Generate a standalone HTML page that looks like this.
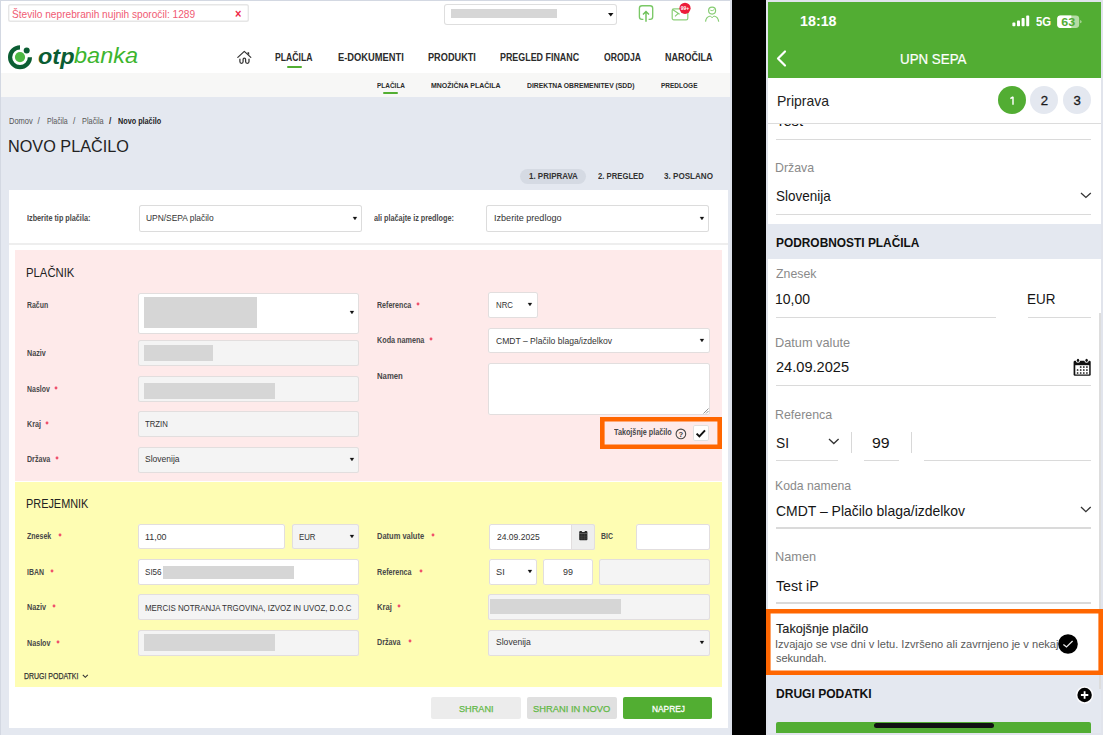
<!DOCTYPE html>
<html><head><meta charset="utf-8"><style>
html,body{margin:0;padding:0;}
body{width:1103px;height:735px;position:relative;overflow:hidden;background:#e4e8f0;font-family:"Liberation Sans", sans-serif;}
.a{position:absolute;box-sizing:border-box;}
.t{position:absolute;line-height:1;white-space:nowrap;transform-origin:0 0;}
svg{position:absolute;overflow:visible;}
</style></head><body>
<div class="a" style="left:0px;top:0px;width:732px;height:735px;background:#e4e8f0;"></div>
<div class="a" style="left:0px;top:0px;width:1.2px;height:735px;background:#d3d8e2;"></div>
<div class="a" style="left:0px;top:0px;width:732px;height:1.3px;background:#d3d8e2;"></div>
<div class="a" style="left:1.2px;top:1.4px;width:729.0999999999999px;height:72.0px;background:#ffffff;"></div>
<div class="a" style="left:1.2px;top:73.4px;width:729.0999999999999px;height:23.39999999999999px;background:#f7f7f6;"></div>
<div class="a" style="left:8.3px;top:4.0px;width:240.5px;height:18.0px;background:#fff;box-shadow:inset 0 0 0 1.4px #e6e6e6;border-radius:2.5px;"></div>
<span class="t" style="left:12.30px;top:9.76px;font-size:10.2px;font-weight:400;color:#f05a73;transform:scaleX(0.9946);">Število neprebranih nujnih sporočil: 1289</span>
<span class="t" style="left:235.20px;top:8.14px;font-size:12px;font-weight:700;color:#ee2a48;transform:scaleX(0.9143);">×</span>
<div class="a" style="left:444px;top:4px;width:173px;height:20.5px;background:#fff;box-shadow:inset 0 0 0 1px #dedede;border-radius:3px;"></div>
<div class="a" style="left:451px;top:9px;width:105.5px;height:9px;background:#d6d6d6;"></div>
<svg style="left:607.5px;top:12.5px" width="6" height="4"><path d="M0 0H5.5L2.75 3.5Z" fill="#111"/></svg>
<svg style="left:8px;top:44px" width="26" height="26" viewBox="0 0 26 26">
<path d="M12 3.3 A9.9 9.9 0 1 0 21.9 13.2" fill="none" stroke="#0b5d33" stroke-width="4.2"/>
<circle cx="12" cy="13.1" r="5.1" fill="#4cb843"/>
<circle cx="18.7" cy="6.6" r="3" fill="#0b5d33"/>
</svg>
<span class="t" style="left:38.00px;top:45.87px;font-size:22px;font-weight:700;color:#0b5d33;transform:scaleX(1.0662);font-style:italic;">otp</span>
<span class="t" style="left:74.46px;top:45.45px;font-size:22.5px;font-weight:400;color:#3db52e;transform:scaleX(1.0446);font-style:italic;">banka</span>
<svg style="left:230px;top:45px" width="30" height="25" viewBox="0 0 30 25">
<path d="M7.8 12.4 L14.3 6.4 L20.8 12.4" fill="none" stroke="#333" stroke-width="1.2" stroke-linecap="round" stroke-linejoin="round"/>
<path d="M17.2 8.2 L17.9 6.9 L19.2 7.6 L19.2 10.2Z" fill="#333"/>
<path d="M9.9 13.8 V16.6 Q9.9 18.4 11.5 18.4 Q13.1 18.4 13.1 16.6 V14.6 Q13.1 13.1 14.35 13.1 Q15.6 13.1 15.6 14.6 V16.6 Q15.6 18.4 17.3 18.4 Q19 18.4 19 16.6 V13.8" fill="none" stroke="#333" stroke-width="1.25"/>
</svg>
<span class="t" style="left:275.00px;top:52.69px;font-size:10.4px;font-weight:700;color:#2b2b2b;transform:scaleX(0.8348);">PLAČILA</span>
<span class="t" style="left:337.50px;top:52.69px;font-size:10.4px;font-weight:700;color:#2b2b2b;transform:scaleX(0.8989);">E-DOKUMENTI</span>
<span class="t" style="left:427.50px;top:52.69px;font-size:10.4px;font-weight:700;color:#2b2b2b;transform:scaleX(0.8828);">PRODUKTI</span>
<span class="t" style="left:499.50px;top:52.69px;font-size:10.4px;font-weight:700;color:#2b2b2b;transform:scaleX(0.8561);">PREGLED FINANC</span>
<span class="t" style="left:603.50px;top:52.69px;font-size:10.4px;font-weight:700;color:#2b2b2b;transform:scaleX(0.8342);">ORODJA</span>
<span class="t" style="left:665.00px;top:52.69px;font-size:10.4px;font-weight:700;color:#2b2b2b;transform:scaleX(0.8675);">NAROČILA</span>
<div class="a" style="left:287px;top:65.5px;width:14.5px;height:2.0px;background:#52ae32;border-radius:1px;"></div>
<svg style="left:638px;top:4px" width="17" height="19" viewBox="0 0 17 19">
<path d="M5.4 15.3 H4 Q1.4 15.3 1.4 12.7 V4.3 Q1.4 1.7 4 1.7 H12.1 Q14.7 1.7 14.7 4.3 V12.7 Q14.7 15.3 12.1 15.3 H10.6" fill="none" stroke="#7ac866" stroke-width="1.35"/>
<path d="M8 17.8 V8 M5 10.6 L8 7.4 L11 10.6" fill="none" stroke="#6cc056" stroke-width="1.4"/>
</svg>
<svg style="left:670px;top:1px" width="24" height="22" viewBox="0 0 24 22">
<rect x="2.2" y="7.9" width="15.6" height="11" rx="1.6" fill="none" stroke="#8fd07c" stroke-width="1.25"/>
<path d="M2.6 8.6 L9.6 13.2 M5 15.4 L8 12.6" fill="none" stroke="#86cc72" stroke-width="1.15"/>
<circle cx="15" cy="7.3" r="5.6" fill="#ec1c3a"/>
<text x="15" y="9.3" font-size="5" font-family="Liberation Sans" fill="#fff" text-anchor="middle" font-weight="700">99+</text>
</svg>
<svg style="left:704px;top:5px" width="17" height="18" viewBox="0 0 17 18">
<circle cx="8.1" cy="5.6" r="3.5" fill="none" stroke="#86cc72" stroke-width="1.2"/>
<path d="M6.3 5.2 Q8 6.6 10.3 4.6" fill="none" stroke="#86cc72" stroke-width="0.9"/>
<path d="M1.5 16.6 Q2.2 11.6 6.4 11 M9.8 11 Q14 11.6 14.7 16.6" fill="none" stroke="#86cc72" stroke-width="1.2"/>
<path d="M6.4 11 L8.1 12.8 L9.8 11" fill="none" stroke="#86cc72" stroke-width="1"/>
</svg>
<span class="t" style="left:376.80px;top:82.33px;font-size:8.0px;font-weight:700;color:#2b2b2b;transform:scaleX(0.8083);">PLAČILA</span>
<span class="t" style="left:431.00px;top:82.33px;font-size:8.0px;font-weight:700;color:#2b2b2b;transform:scaleX(0.8727);">MNOŽIČNA PLAČILA</span>
<span class="t" style="left:527.00px;top:82.33px;font-size:8.0px;font-weight:700;color:#2b2b2b;transform:scaleX(0.8504);">DIREKTNA OBREMENITEV (SDD)</span>
<span class="t" style="left:661.00px;top:82.33px;font-size:8.0px;font-weight:700;color:#2b2b2b;transform:scaleX(0.8121);">PREDLOGE</span>
<div class="a" style="left:383px;top:92px;width:15px;height:2px;background:#52ae32;border-radius:1px;"></div>
<span class="t" style="left:8.50px;top:116.89px;font-size:8.4px;font-weight:400;color:#555;transform:scaleX(0.8961);">Domov</span>
<span class="t" style="left:37.50px;top:116.89px;font-size:8.4px;font-weight:400;color:#555;">/</span>
<span class="t" style="left:47.00px;top:116.89px;font-size:8.4px;font-weight:400;color:#555;transform:scaleX(0.8396);">Plačila</span>
<span class="t" style="left:73.00px;top:116.89px;font-size:8.4px;font-weight:400;color:#555;">/</span>
<span class="t" style="left:82.00px;top:116.89px;font-size:8.4px;font-weight:400;color:#555;transform:scaleX(0.8795);">Plačila</span>
<span class="t" style="left:109.00px;top:116.89px;font-size:8.4px;font-weight:700;color:#333;">/</span>
<span class="t" style="left:118.00px;top:116.89px;font-size:8.4px;font-weight:700;color:#222;transform:scaleX(0.8656);">Novo plačilo</span>
<span class="t" style="left:7.57px;top:137.57px;font-size:17.4px;font-weight:400;color:#222;transform:scaleX(0.9338);">NOVO PLAČILO</span>
<div class="a" style="left:520px;top:169px;width:66.39999999999998px;height:15px;background:#d5dae3;border-radius:7.5px;"></div>
<span class="t" style="left:529.00px;top:172.28px;font-size:9.0px;font-weight:700;color:#333;transform:scaleX(0.8854);">1. PRIPRAVA</span>
<span class="t" style="left:598.00px;top:172.28px;font-size:9.0px;font-weight:700;color:#333;transform:scaleX(0.8554);">2. PREGLED</span>
<span class="t" style="left:663.50px;top:172.28px;font-size:9.0px;font-weight:700;color:#333;transform:scaleX(0.8989);">3. POSLANO</span>
<div class="a" style="left:8.5px;top:190px;width:719.0px;height:537.8px;background:#ffffff;"></div>
<span class="t" style="left:27.00px;top:214.00px;font-size:8.5px;font-weight:700;color:#484848;transform:scaleX(0.8544);">Izberite tip plačila:</span>
<div class="a" style="left:138.5px;top:205px;width:223.89999999999998px;height:26.69999999999999px;background:#fff;box-shadow:inset 0 0 0 1px #dcdcdc;border-radius:2.5px;"></div>
<span class="t" style="left:146.00px;top:213.07px;font-size:9.6px;font-weight:400;color:#333;transform:scaleX(0.8767);">UPN/SEPA plačilo</span>
<svg style="left:352.8px;top:216.6px" width="5" height="4"><path d="M0 0.1H3.9L1.95 2.9Z" fill="#111" stroke="#111" stroke-width="0.3" stroke-linejoin="round"/></svg>
<span class="t" style="left:373.80px;top:214.00px;font-size:8.5px;font-weight:700;color:#484848;transform:scaleX(0.8538);">ali plačajte iz predloge:</span>
<div class="a" style="left:485.9px;top:205px;width:223.60000000000002px;height:26.5px;background:#fff;box-shadow:inset 0 0 0 1px #dcdcdc;border-radius:2.5px;"></div>
<span class="t" style="left:493.80px;top:213.07px;font-size:9.6px;font-weight:400;color:#333;transform:scaleX(0.9447);">Izberite predlogo</span>
<svg style="left:700.3px;top:216.6px" width="5" height="4"><path d="M0 0.1H3.9L1.95 2.9Z" fill="#111" stroke="#111" stroke-width="0.3" stroke-linejoin="round"/></svg>
<div class="a" style="left:8.5px;top:243px;width:719.0px;height:1.5px;background:#eeeeee;"></div>
<div class="a" style="left:14.5px;top:249.8px;width:707.5px;height:231.7px;background:#feeaea;"></div>
<span class="t" style="left:26.11px;top:266.65px;font-size:12.7px;font-weight:400;color:#222;transform:scaleX(0.8917);">PLAČNIK</span>
<span class="t" style="left:27.00px;top:301.00px;font-size:8.5px;font-weight:700;color:#484848;transform:scaleX(0.8144);">Račun</span>
<div class="a" style="left:137.7px;top:292.5px;width:221.5px;height:41.19999999999999px;background:#fff;box-shadow:inset 0 0 0 1px #e2dede;border-radius:2.5px;"></div>
<div class="a" style="left:144px;top:297px;width:112.5px;height:31px;background:#d6d6d6;"></div>
<svg style="left:349.8px;top:311.1px" width="5" height="4"><path d="M0 0.1H3.9L1.95 2.9Z" fill="#111" stroke="#111" stroke-width="0.3" stroke-linejoin="round"/></svg>
<span class="t" style="left:27.00px;top:348.90px;font-size:8.5px;font-weight:700;color:#484848;transform:scaleX(0.8453);">Naziv</span>
<div class="a" style="left:137.7px;top:340px;width:221.5px;height:26px;background:#f4f4f4;box-shadow:inset 0 0 0 1px #e2dede;border-radius:2.5px;"></div>
<div class="a" style="left:144px;top:345px;width:69px;height:16px;background:#d6d6d6;"></div>
<span class="t" style="left:27.00px;top:384.80px;font-size:8.5px;font-weight:700;color:#484848;transform:scaleX(0.8171);">Naslov</span>
<svg style="left:54px;top:385.8px" width="4" height="4"><circle cx="2" cy="2" r="1.45" fill="#f0506c"/></svg>
<div class="a" style="left:137.7px;top:375.7px;width:221.5px;height:26.19999999999999px;background:#f4f4f4;box-shadow:inset 0 0 0 1px #e2dede;border-radius:2.5px;"></div>
<div class="a" style="left:144px;top:382.5px;width:130.5px;height:16.0px;background:#d6d6d6;"></div>
<span class="t" style="left:27.00px;top:419.90px;font-size:8.5px;font-weight:700;color:#484848;transform:scaleX(0.8409);">Kraj</span>
<svg style="left:44.6px;top:420.90000000000003px" width="4" height="4"><circle cx="2" cy="2" r="1.45" fill="#f0506c"/></svg>
<div class="a" style="left:137.7px;top:411px;width:221.5px;height:26px;background:#f4f4f4;box-shadow:inset 0 0 0 1px #e2dede;border-radius:2.5px;"></div>
<span class="t" style="left:145.00px;top:419.02px;font-size:9.9px;font-weight:400;color:#333;transform:scaleX(0.7879);">TRZIN</span>
<span class="t" style="left:27.00px;top:455.10px;font-size:8.5px;font-weight:700;color:#484848;transform:scaleX(0.8348);">Država</span>
<svg style="left:54.5px;top:456.1px" width="4" height="4"><circle cx="2" cy="2" r="1.45" fill="#f0506c"/></svg>
<div class="a" style="left:137.7px;top:446.5px;width:221.5px;height:26.0px;background:#f4f4f4;box-shadow:inset 0 0 0 1px #e2dede;border-radius:2.5px;"></div>
<span class="t" style="left:145.00px;top:454.32px;font-size:9.9px;font-weight:400;color:#333;transform:scaleX(0.8625);">Slovenija</span>
<svg style="left:349.8px;top:457.6px" width="5" height="4"><path d="M0 0.1H3.9L1.95 2.9Z" fill="#111" stroke="#111" stroke-width="0.3" stroke-linejoin="round"/></svg>
<span class="t" style="left:377.20px;top:300.90px;font-size:8.5px;font-weight:700;color:#484848;transform:scaleX(0.8338);">Referenca</span>
<svg style="left:416px;top:301.90000000000003px" width="4" height="4"><circle cx="2" cy="2" r="1.45" fill="#f0506c"/></svg>
<div class="a" style="left:488.3px;top:292px;width:49.30000000000001px;height:26.399999999999977px;background:#fff;box-shadow:inset 0 0 0 1px #e2dede;border-radius:2.5px;"></div>
<span class="t" style="left:495.50px;top:300.42px;font-size:9.9px;font-weight:400;color:#333;transform:scaleX(0.7948);">NRC</span>
<svg style="left:527.8px;top:303.3px" width="5" height="4"><path d="M0 0.1H3.9L1.95 2.9Z" fill="#111" stroke="#111" stroke-width="0.3" stroke-linejoin="round"/></svg>
<span class="t" style="left:377.20px;top:336.40px;font-size:8.5px;font-weight:700;color:#484848;transform:scaleX(0.8499);">Koda namena</span>
<svg style="left:429px;top:337.40000000000003px" width="4" height="4"><circle cx="2" cy="2" r="1.45" fill="#f0506c"/></svg>
<div class="a" style="left:488px;top:328px;width:222px;height:25.30000000000001px;background:#fff;box-shadow:inset 0 0 0 1px #e2dede;border-radius:2.5px;"></div>
<span class="t" style="left:495.50px;top:335.82px;font-size:9.9px;font-weight:400;color:#333;transform:scaleX(0.8673);">CMDT – Plačilo blaga/izdelkov</span>
<svg style="left:700.3px;top:338.6px" width="5" height="4"><path d="M0 0.1H3.9L1.95 2.9Z" fill="#111" stroke="#111" stroke-width="0.3" stroke-linejoin="round"/></svg>
<span class="t" style="left:377.20px;top:371.90px;font-size:8.5px;font-weight:700;color:#484848;transform:scaleX(0.9094);">Namen</span>
<div class="a" style="left:488px;top:363px;width:222px;height:52.30000000000001px;background:#fff;box-shadow:inset 0 0 0 1px #e2dede;border-radius:2.5px;"></div>
<svg style="left:702px;top:407px" width="7" height="7"><path d="M1.5 6.5 L6.5 1.5 M4 6.5 L6.5 4" stroke="#777" stroke-width="0.8"/></svg>
<span class="t" style="left:613.80px;top:428.40px;font-size:8.5px;font-weight:700;color:#484848;transform:scaleX(0.8512);">Takojšnje plačilo</span>
<svg style="left:675.3px;top:427.5px" width="12" height="12" viewBox="0 0 12 12">
<circle cx="5.9" cy="5.9" r="4.8" fill="none" stroke="#4a4a4a" stroke-width="1.1"/>
<text x="5.9" y="8.6" font-size="7.6" font-weight="700" font-family="Liberation Sans" fill="#3a3a3a" text-anchor="middle">?</text></svg>
<div class="a" style="left:692.7px;top:425.4px;width:15.899999999999977px;height:15.600000000000023px;background:#fff;box-shadow:inset 0 0 0 1px #e0e0e0;border-radius:2px;"></div>
<svg style="left:695px;top:428px" width="12" height="11"><path d="M1.6 5.6 L4.4 8.4 L10 2.4" fill="none" stroke="#111" stroke-width="2"/></svg>
<div class="a" style="left:600px;top:417px;width:121.5px;height:31.80000000000001px;background:transparent;box-shadow:inset 0 0 0 4.6px #ff6600;"></div>
<div class="a" style="left:14.5px;top:481.5px;width:707.5px;height:205.5px;background:#fefdb3;"></div>
<span class="t" style="left:26.14px;top:497.85px;font-size:12.7px;font-weight:400;color:#222;transform:scaleX(0.8593);">PREJEMNIK</span>
<span class="t" style="left:26.80px;top:532.30px;font-size:8.5px;font-weight:700;color:#484848;transform:scaleX(0.8286);">Znesek</span>
<svg style="left:57.7px;top:533.3px" width="4" height="4"><circle cx="2" cy="2" r="1.45" fill="#f0506c"/></svg>
<div class="a" style="left:137.7px;top:523.7px;width:146.90000000000003px;height:25.799999999999955px;background:#fff;box-shadow:inset 0 0 0 1px #e2dede;border-radius:2.5px;"></div>
<span class="t" style="left:145.00px;top:531.62px;font-size:9.9px;font-weight:400;color:#333;transform:scaleX(0.8985);">11,00</span>
<div class="a" style="left:291.6px;top:523.7px;width:67.39999999999998px;height:25.799999999999955px;background:#f4f4f4;box-shadow:inset 0 0 0 1px #e2dede;border-radius:2.5px;"></div>
<span class="t" style="left:299.00px;top:531.62px;font-size:9.9px;font-weight:400;color:#333;transform:scaleX(0.7916);">EUR</span>
<svg style="left:349.8px;top:534.6px" width="5" height="4"><path d="M0 0.1H3.9L1.95 2.9Z" fill="#111" stroke="#111" stroke-width="0.3" stroke-linejoin="round"/></svg>
<span class="t" style="left:26.80px;top:567.50px;font-size:8.5px;font-weight:700;color:#484848;transform:scaleX(0.8140);">IBAN</span>
<svg style="left:50.3px;top:568.5px" width="4" height="4"><circle cx="2" cy="2" r="1.45" fill="#f0506c"/></svg>
<div class="a" style="left:137.7px;top:559.3px;width:221.3px;height:26.0px;background:#fff;box-shadow:inset 0 0 0 1px #e2dede;border-radius:2.5px;"></div>
<span class="t" style="left:145.00px;top:567.32px;font-size:9.9px;font-weight:400;color:#333;transform:scaleX(0.8164);">SI56</span>
<div class="a" style="left:163.4px;top:566px;width:130.6px;height:13px;background:#d6d6d6;"></div>
<span class="t" style="left:26.80px;top:603.00px;font-size:8.5px;font-weight:700;color:#484848;transform:scaleX(0.8542);">Naziv</span>
<svg style="left:52px;top:604.0px" width="4" height="4"><circle cx="2" cy="2" r="1.45" fill="#f0506c"/></svg>
<div class="a" style="left:137.7px;top:594px;width:221.3px;height:26.299999999999955px;background:#f4f4f4;box-shadow:inset 0 0 0 1px #e2dede;border-radius:2.5px;"></div>
<span class="t" style="left:145.00px;top:602.72px;font-size:9.9px;font-weight:400;color:#333;transform:scaleX(0.7998);">MERCIS NOTRANJA TRGOVINA, IZVOZ IN UVOZ, D.O.C</span>
<span class="t" style="left:26.80px;top:638.80px;font-size:8.5px;font-weight:700;color:#484848;transform:scaleX(0.8420);">Naslov</span>
<svg style="left:56.4px;top:639.8px" width="4" height="4"><circle cx="2" cy="2" r="1.45" fill="#f0506c"/></svg>
<div class="a" style="left:137.7px;top:629.6px;width:221.3px;height:26.0px;background:#f4f4f4;box-shadow:inset 0 0 0 1px #e2dede;border-radius:2.5px;"></div>
<div class="a" style="left:144px;top:634.3px;width:130.5px;height:16.5px;background:#d6d6d6;"></div>
<span class="t" style="left:23.80px;top:672.08px;font-size:9.0px;font-weight:400;color:#333;transform:scaleX(0.7732);-webkit-text-stroke:0.25px #333;">DRUGI PODATKI</span>
<svg style="left:82px;top:674px" width="7" height="5"><path d="M0.8 0.8 L3.3 3.3 L5.8 0.8" fill="none" stroke="#333" stroke-width="1.1"/></svg>
<span class="t" style="left:377.20px;top:532.10px;font-size:8.5px;font-weight:700;color:#484848;transform:scaleX(0.8817);">Datum valute</span>
<svg style="left:431px;top:533.0999999999999px" width="4" height="4"><circle cx="2" cy="2" r="1.45" fill="#f0506c"/></svg>
<div class="a" style="left:488.5px;top:523.8px;width:106.79999999999995px;height:25.800000000000068px;background:#fff;box-shadow:inset 0 0 0 1px #e2dede;border-radius:2.5px;"></div>
<div class="a" style="left:571px;top:523.8px;width:24.299999999999955px;height:25.800000000000068px;background:#eeeeee;box-shadow:inset 0 0 0 1px #e2dede;border-radius:0 2.5px 2.5px 0;"></div>
<span class="t" style="left:496.90px;top:532.22px;font-size:9.9px;font-weight:400;color:#333;transform:scaleX(0.8632);">24.09.2025</span>
<svg style="left:578.5px;top:531.3px" width="9" height="10"><path d="M0.2 1.2 Q0.2 0.1 1.4 0.1 L2.6 0.1 L3.2 0.9 L5.4 0.9 L6 0.1 L7.2 0.1 Q8.4 0.1 8.4 1.2 V8.4 Q8.4 9.2 7.6 9.2 H1 Q0.2 9.2 0.2 8.4Z" fill="#2a2a2a"/><rect x="0.2" y="2.4" width="8.2" height="0.5" fill="#888"/><path d="M0.2 5.3 H8.4 M0.2 7.2 H8.4 M2.9 3 V9 M5.6 3 V9" stroke="#555" stroke-width="0.35"/></svg>
<span class="t" style="left:601.00px;top:531.80px;font-size:8.5px;font-weight:700;color:#484848;transform:scaleX(0.8138);">BIC</span>
<div class="a" style="left:635.6px;top:523.8px;width:74.39999999999998px;height:25.800000000000068px;background:#fff;box-shadow:inset 0 0 0 1px #e2dede;border-radius:2.5px;"></div>
<span class="t" style="left:377.20px;top:567.60px;font-size:8.5px;font-weight:700;color:#484848;transform:scaleX(0.8410);">Referenca</span>
<svg style="left:419px;top:568.5999999999999px" width="4" height="4"><circle cx="2" cy="2" r="1.45" fill="#f0506c"/></svg>
<div class="a" style="left:488.5px;top:559.3px;width:48.89999999999998px;height:26.0px;background:#fff;box-shadow:inset 0 0 0 1px #e2dede;border-radius:2.5px;"></div>
<span class="t" style="left:496.00px;top:567.02px;font-size:9.9px;font-weight:400;color:#333;transform:scaleX(0.9317);">SI</span>
<svg style="left:527.8px;top:569.6px" width="5" height="4"><path d="M0 0.1H3.9L1.95 2.9Z" fill="#111" stroke="#111" stroke-width="0.3" stroke-linejoin="round"/></svg>
<div class="a" style="left:543.3px;top:559.3px;width:49.60000000000002px;height:26.0px;background:#fff;box-shadow:inset 0 0 0 1px #e2dede;border-radius:2.5px;"></div>
<span class="t" style="left:563.40px;top:567.02px;font-size:9.9px;font-weight:400;color:#333;transform:scaleX(0.9050);">99</span>
<div class="a" style="left:598.7px;top:559.3px;width:111.29999999999995px;height:26.0px;background:#f4f4f4;box-shadow:inset 0 0 0 1px #e2dede;border-radius:2.5px;"></div>
<span class="t" style="left:377.20px;top:602.80px;font-size:8.5px;font-weight:700;color:#484848;transform:scaleX(0.8965);">Kraj</span>
<svg style="left:397.3px;top:603.8px" width="4" height="4"><circle cx="2" cy="2" r="1.45" fill="#f0506c"/></svg>
<div class="a" style="left:488px;top:594.4px;width:222px;height:25.800000000000068px;background:#f4f4f4;box-shadow:inset 0 0 0 1px #e2dede;border-radius:2.5px;"></div>
<div class="a" style="left:490.2px;top:598.5px;width:130.59999999999997px;height:15.5px;background:#d6d6d6;"></div>
<span class="t" style="left:377.20px;top:638.20px;font-size:8.5px;font-weight:700;color:#484848;transform:scaleX(0.8454);">Država</span>
<svg style="left:408px;top:639.1999999999999px" width="4" height="4"><circle cx="2" cy="2" r="1.45" fill="#f0506c"/></svg>
<div class="a" style="left:488px;top:629.6px;width:222px;height:26.0px;background:#f4f4f4;box-shadow:inset 0 0 0 1px #e2dede;border-radius:2.5px;"></div>
<span class="t" style="left:495.50px;top:637.32px;font-size:9.9px;font-weight:400;color:#333;transform:scaleX(0.8674);">Slovenija</span>
<svg style="left:700.3px;top:640.6px" width="5" height="4"><path d="M0 0.1H3.9L1.95 2.9Z" fill="#111" stroke="#111" stroke-width="0.3" stroke-linejoin="round"/></svg>
<div class="a" style="left:431px;top:697px;width:90px;height:22.399999999999977px;background:#ececec;border-radius:2px;"></div>
<span class="t" style="left:459.20px;top:703.87px;font-size:9.6px;font-weight:400;color:#62b846;transform:scaleX(0.9527);-webkit-text-stroke:0.25px #62b846;">SHRANI</span>
<div class="a" style="left:527.3px;top:697px;width:89.40000000000009px;height:22.399999999999977px;background:#e0e0e0;border-radius:2px;"></div>
<span class="t" style="left:533.10px;top:703.87px;font-size:9.6px;font-weight:400;color:#62b846;transform:scaleX(0.9739);-webkit-text-stroke:0.25px #62b846;">SHRANI IN NOVO</span>
<div class="a" style="left:623px;top:697px;width:89.39999999999998px;height:22.399999999999977px;background:#52ae32;border-radius:2px;"></div>
<span class="t" style="left:651.50px;top:703.87px;font-size:9.6px;font-weight:400;color:#ffffff;transform:scaleX(0.8698);-webkit-text-stroke:0.3px #fff;">NAPREJ</span>
<div class="a" style="left:730.3px;top:0px;width:1.7000000000000455px;height:735px;background:#dde1ea;"></div>
<div class="a" style="left:732px;top:0px;width:34px;height:735px;background:#000000;"></div>
<div class="a" style="left:766px;top:0px;width:337px;height:735px;background:#e1e4ec;"></div>
<div class="a" style="left:768px;top:1.5px;width:333px;height:731.5px;background:#ffffff;"></div>
<span class="t" style="left:776.00px;top:114.04px;font-size:14.6px;font-weight:400;color:#111;transform:scaleX(1.0109);">Test</span>
<div class="a" style="left:768px;top:1.5px;width:333px;height:76.1px;background:#52ad33;"></div>
<span class="t" style="left:800.30px;top:13.74px;font-size:14.6px;font-weight:700;color:#fff;transform:scaleX(0.9783);">18:18</span>
<svg style="left:1012px;top:15px" width="19" height="12" viewBox="0 0 19 12">
<rect x="0.4" y="7.6" width="3" height="3.6" rx="0.8" fill="#fff"/>
<rect x="5" y="5.4" width="3" height="5.8" rx="0.8" fill="#fff"/>
<rect x="9.6" y="3" width="3" height="8.2" rx="0.8" fill="#fff"/>
<rect x="14.2" y="0.6" width="3" height="10.6" rx="0.8" fill="#fff"/></svg>
<span class="t" style="left:1035.70px;top:16.13px;font-size:12.6px;font-weight:700;color:#fff;transform:scaleX(0.8998);">5G</span>
<svg style="left:1056px;top:14.5px" width="28" height="14" viewBox="0 0 28 14">
<rect x="1.2" y="0.4" width="22" height="12.5" rx="3.4" fill="#b5dca4"/>
<path d="M4.6 0.4 H15.3 V12.9 H4.6 Q1.2 12.9 1.2 9.5 V3.8 Q1.2 0.4 4.6 0.4Z" fill="#fff"/>
<path d="M24.2 5 Q25.6 5.6 25.6 6.65 Q25.6 7.7 24.2 8.3Z" fill="#b5dca4"/>
<text x="12.25" y="10.7" font-size="11.4" font-weight="700" font-family="Liberation Sans" fill="#52ad33" text-anchor="middle" textLength="13.9" lengthAdjust="spacingAndGlyphs">63</text></svg>
<svg style="left:775.4px;top:49.8px" width="13" height="17"><path d="M10 1.5 L3 8.5 L10 15.5" fill="none" stroke="#fff" stroke-width="2.2" stroke-linecap="round" stroke-linejoin="round"/></svg>
<span class="t" style="left:899.76px;top:51.58px;font-size:14.2px;font-weight:400;color:#fff;transform:scaleX(0.9398);-webkit-text-stroke:0.2px #fff;">UPN SEPA</span>
<div class="a" style="left:768px;top:77.6px;width:333px;height:45.400000000000006px;background:#ffffff;"></div>
<div class="a" style="left:768px;top:122.8px;width:333px;height:1.2000000000000028px;background:#dcdcdc;"></div>
<span class="t" style="left:776.61px;top:93.68px;font-size:14.2px;font-weight:400;color:#222;transform:scaleX(0.9858);">Priprava</span>
<svg style="left:998.3px;top:86.1px" width="28" height="28"><circle cx="14" cy="14" r="14" fill="#52ad33"/></svg>
<svg style="left:1030.4px;top:86.1px" width="28" height="28"><circle cx="14" cy="14" r="14" fill="#e4e8f0"/></svg>
<svg style="left:1063.1px;top:86.1px" width="28" height="28"><circle cx="14" cy="14" r="14" fill="#e4e8f0"/></svg>
<svg style="left:1005px;top:92px" width="16" height="16"><path d="M8 4.7 V12.7 M8 4.8 L5.4 6.7" fill="none" stroke="#fff" stroke-width="1.45" stroke-linejoin="round"/></svg>
<span class="t" style="left:1040.80px;top:93.82px;font-size:13.2px;font-weight:400;color:#1a1a1a;-webkit-text-stroke:0.3px #1a1a1a;">2</span>
<span class="t" style="left:1073.50px;top:93.82px;font-size:13.2px;font-weight:400;color:#1a1a1a;-webkit-text-stroke:0.3px #1a1a1a;">3</span>
<div class="a" style="left:776px;top:138.8px;width:315px;height:1.5px;background:#dadada;"></div>
<span class="t" style="left:775.04px;top:162.06px;font-size:12.8px;font-weight:400;color:#8a8a8a;transform:scaleX(0.9649);">Država</span>
<span class="t" style="left:776.00px;top:188.64px;font-size:14.6px;font-weight:400;color:#151515;transform:scaleX(0.9234);">Slovenija</span>
<svg style="left:1079.8px;top:192.4px" width="11.8" height="6.4"><path d="M1 1 L5.9 5.4 L10.8 1" fill="none" stroke="#333" stroke-width="1.3"/></svg>
<div class="a" style="left:776px;top:213.5px;width:315px;height:1.5px;background:#dadada;"></div>
<div class="a" style="left:768px;top:223.5px;width:333px;height:35.10000000000002px;background:#e4e8f0;"></div>
<span class="t" style="left:776.00px;top:236.39px;font-size:13px;font-weight:700;color:#111;transform:scaleX(0.9152);">PODROBNOSTI PLAČILA</span>
<span class="t" style="left:776.00px;top:268.16px;font-size:12.8px;font-weight:400;color:#8a8a8a;transform:scaleX(0.9632);">Znesek</span>
<span class="t" style="left:775.04px;top:292.34px;font-size:14.6px;font-weight:400;color:#151515;transform:scaleX(0.9604);">10,00</span>
<span class="t" style="left:1027.08px;top:292.34px;font-size:14.6px;font-weight:400;color:#151515;transform:scaleX(0.9223);">EUR</span>
<div class="a" style="left:776px;top:316.5px;width:220.29999999999995px;height:1.5px;background:#dadada;"></div>
<div class="a" style="left:1028px;top:316.5px;width:63px;height:1.5px;background:#dadada;"></div>
<span class="t" style="left:775.00px;top:336.56px;font-size:12.8px;font-weight:400;color:#8a8a8a;transform:scaleX(0.9963);">Datum valute</span>
<span class="t" style="left:776.00px;top:360.14px;font-size:14.6px;font-weight:400;color:#151515;">24.09.2025</span>
<svg style="left:1073px;top:357.5px" width="19" height="19" viewBox="0 0 19 19">
<rect x="0.6" y="2.7" width="17.1" height="15" rx="1.3" fill="#111"/>
<rect x="2.3" y="7.2" width="13.9" height="9.3" fill="#fff"/>
<circle cx="5" cy="2.5" r="2.2" fill="#fff"/><circle cx="13.6" cy="2.5" r="2.2" fill="#fff"/>
<ellipse cx="5" cy="2.3" rx="1.2" ry="1.6" fill="#111"/><ellipse cx="13.6" cy="2.3" rx="1.2" ry="1.6" fill="#111"/>
<g fill="#111"><rect x="6.8500000000000005" y="8.35" width="1.7" height="1.5" rx="0.4"/><rect x="9.950000000000001" y="8.35" width="1.7" height="1.5" rx="0.4"/><rect x="13.05" y="8.35" width="1.7" height="1.5" rx="0.4"/><rect x="3.7499999999999996" y="11.35" width="1.7" height="1.5" rx="0.4"/><rect x="6.8500000000000005" y="11.35" width="1.7" height="1.5" rx="0.4"/><rect x="9.950000000000001" y="11.35" width="1.7" height="1.5" rx="0.4"/><rect x="13.05" y="11.35" width="1.7" height="1.5" rx="0.4"/><rect x="3.7499999999999996" y="14.25" width="1.7" height="1.5" rx="0.4"/><rect x="6.8500000000000005" y="14.25" width="1.7" height="1.5" rx="0.4"/><rect x="9.950000000000001" y="14.25" width="1.7" height="1.5" rx="0.4"/><rect x="13.05" y="14.25" width="1.7" height="1.5" rx="0.4"/></g></svg>
<div class="a" style="left:776px;top:384.90000000000003px;width:315px;height:1.5px;background:#dadada;"></div>
<span class="t" style="left:775.03px;top:408.86px;font-size:12.8px;font-weight:400;color:#8a8a8a;transform:scaleX(0.9673);">Referenca</span>
<span class="t" style="left:776.00px;top:435.54px;font-size:14.6px;font-weight:400;color:#151515;transform:scaleX(0.9424);">SI</span>
<svg style="left:827.9px;top:438.2px" width="11.6" height="6.5"><path d="M1 1 L5.8 5.5 L10.6 1" fill="none" stroke="#333" stroke-width="1.3"/></svg>
<div class="a" style="left:850.5px;top:432px;width:1.2000000000000455px;height:21px;background:#d8d8d8;"></div>
<span class="t" style="left:872.20px;top:435.54px;font-size:14.6px;font-weight:400;color:#151515;transform:scaleX(1.0859);">99</span>
<div class="a" style="left:911.2px;top:432px;width:1.1999999999999318px;height:21px;background:#d8d8d8;"></div>
<div class="a" style="left:776px;top:459.6px;width:62.39999999999998px;height:1.5px;background:#dadada;"></div>
<div class="a" style="left:863.5px;top:459.6px;width:35.5px;height:1.5px;background:#dadada;"></div>
<div class="a" style="left:923.9px;top:459.6px;width:167.10000000000002px;height:1.5px;background:#dadada;"></div>
<span class="t" style="left:775.04px;top:479.66px;font-size:12.8px;font-weight:400;color:#8a8a8a;transform:scaleX(0.9551);">Koda namena</span>
<span class="t" style="left:776.00px;top:503.94px;font-size:14.6px;font-weight:400;color:#151515;transform:scaleX(0.9567);">CMDT – Plačilo blaga/izdelkov</span>
<svg style="left:1079.9px;top:506.4px" width="11.7" height="6.6"><path d="M1 1 L5.85 5.6 L10.7 1" fill="none" stroke="#333" stroke-width="1.3"/></svg>
<div class="a" style="left:776px;top:527.3px;width:315px;height:1.5px;background:#dadada;"></div>
<span class="t" style="left:775.00px;top:551.26px;font-size:12.8px;font-weight:400;color:#8a8a8a;transform:scaleX(0.9966);">Namen</span>
<span class="t" style="left:776.00px;top:578.64px;font-size:14.6px;font-weight:400;color:#151515;transform:scaleX(0.9754);">Test iP</span>
<div class="a" style="left:776px;top:602.0999999999999px;width:315px;height:1.5px;background:#dadada;"></div>
<div class="a" style="left:771px;top:613.2px;width:327.5px;height:57.09999999999991px;background:#ffffff;"></div>
<span class="t" style="left:776.00px;top:621.99px;font-size:13px;font-weight:400;color:#222;transform:scaleX(0.9742);-webkit-text-stroke:0.15px #222;">Takojšnje plačilo</span>
<span class="t" style="left:775.01px;top:638.72px;font-size:11.2px;font-weight:400;color:#5a5a5a;transform:scaleX(0.9910);">Izvajajo se vse dni v letu. Izvršeno ali zavrnjeno je v nekaj</span>
<span class="t" style="left:776.00px;top:652.52px;font-size:11.2px;font-weight:400;color:#5a5a5a;transform:scaleX(0.9802);">sekundah.</span>
<svg style="left:1058px;top:634px" width="20" height="20" viewBox="0 0 20 20">
<circle cx="10" cy="10" r="9.8" fill="#000"/>
<path d="M5.4 10.4 L8.5 13 L14.6 7" fill="none" stroke="#e8e8e8" stroke-width="1.25"/></svg>
<div class="a" style="left:768px;top:674.9px;width:333px;height:58.10000000000002px;background:#e4e8f0;"></div>
<span class="t" style="left:776.00px;top:687.19px;font-size:13px;font-weight:700;color:#111;transform:scaleX(0.9275);">DRUGI PODATKI</span>
<svg style="left:1076px;top:686px" width="18" height="18" viewBox="0 0 18 18">
<circle cx="8.6" cy="9" r="8.7" fill="#fbfbfd"/>
<circle cx="8.6" cy="9" r="7.2" fill="#000"/>
<path d="M8.6 5.3 V12.7 M4.9 9 H12.3" stroke="#fff" stroke-width="1.8"/></svg>
<div class="a" style="left:776px;top:722.2px;width:314.79999999999995px;height:10.799999999999955px;background:#52ad33;border-radius:2px 2px 0 0;"></div>
<div class="a" style="left:873.5px;top:723px;width:120.5px;height:5.2000000000000455px;background:#111;border-radius:2.6px;"></div>
<div class="a" style="left:1099px;top:313px;width:2px;height:376px;background:#dddddd;"></div>
<div class="a" style="left:766.2px;top:608.8px;width:336.79999999999995px;height:66.10000000000002px;background:transparent;box-shadow:inset 0 0 0 4.6px #ff6600;"></div>
</body></html>
